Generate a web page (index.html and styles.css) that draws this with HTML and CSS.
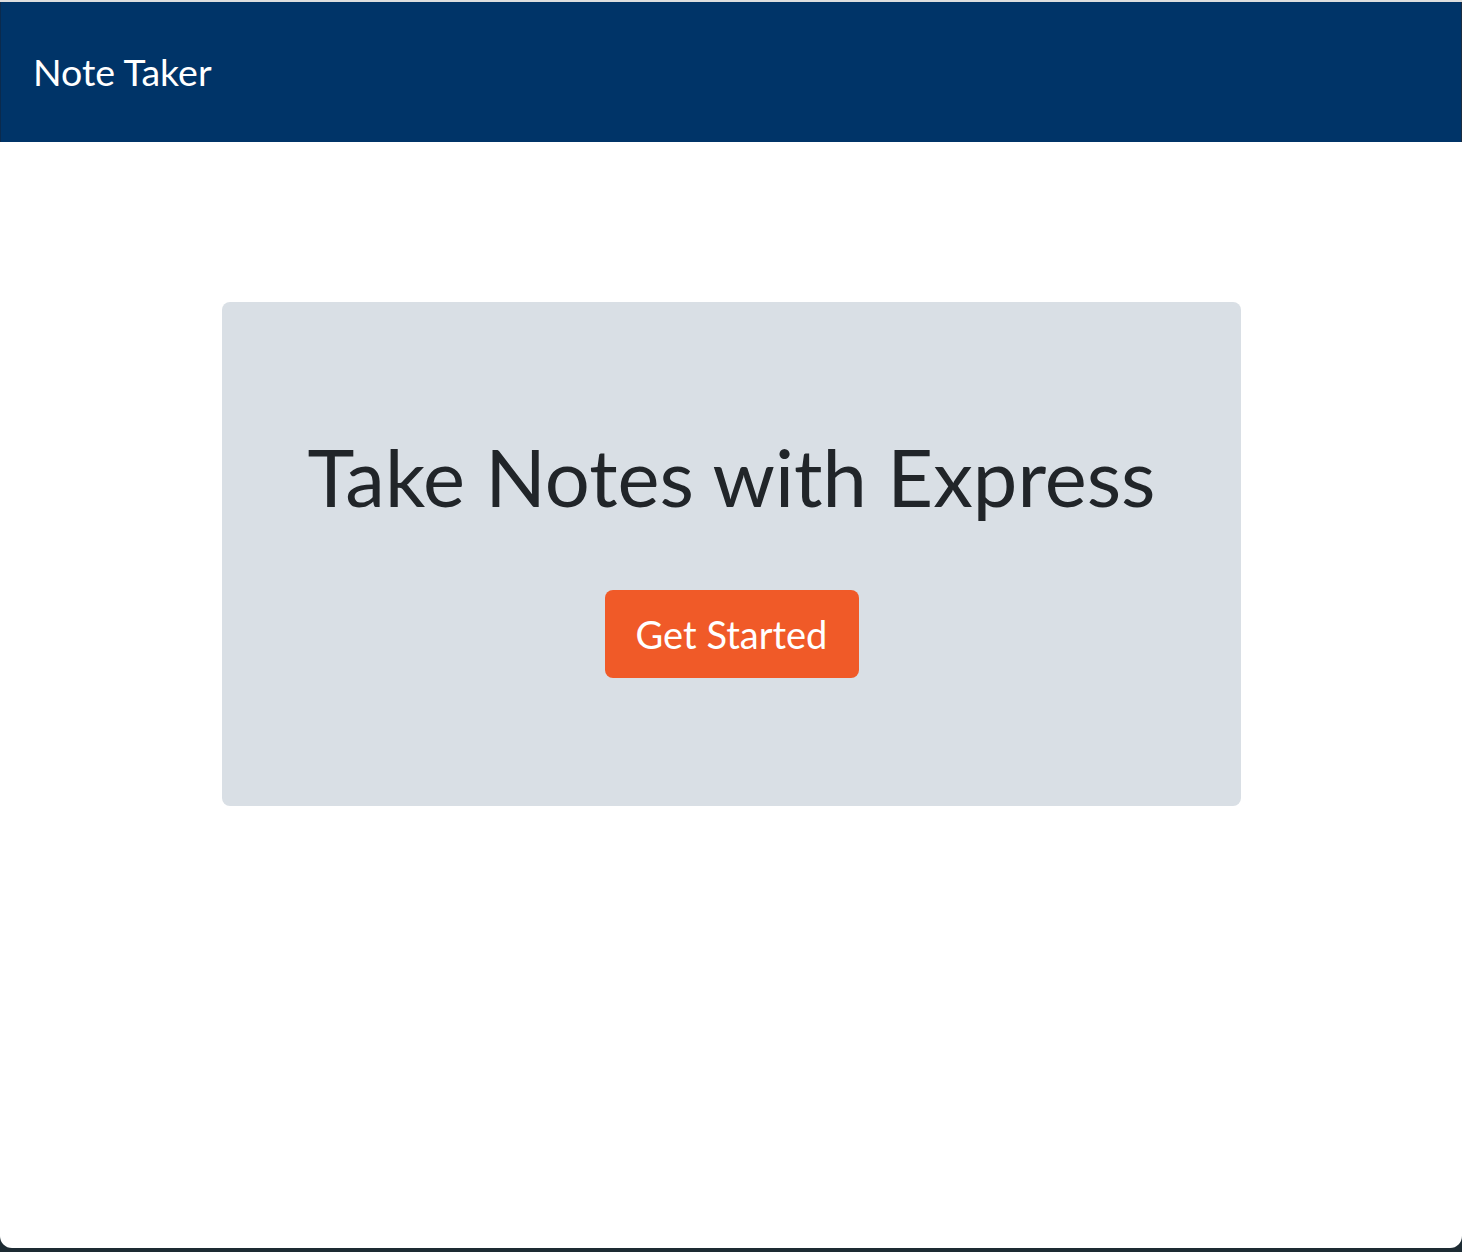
FILE: index.html
```html
<!DOCTYPE html>
<html lang="en">
<head>
<meta charset="utf-8">
<title>Note Taker</title>
<link rel="stylesheet" href="styles.css">
</head>
<body>
<div class="window">
  <nav class="navbar">
    <span class="brand">Note Taker</span>
  </nav>
  <main class="content">
    <section class="jumbotron">
      <h1 class="title">Take Notes with Express</h1>
      <a class="btn" href="#">Get Started</a>
    </section>
  </main>
</div>
</body>
</html>
```
FILE: styles.css
```css
html, body {
  margin: 0;
  padding: 0;
  height: 100%;
}
body {
  background: #1d2b33;
  font-family: Lato, "Open Sans", sans-serif;
  color: #212529;
}
.window {
  height: 1248px;
  background: #ffffff;
  border-top: 2px solid #dedede;
  border-radius: 0 0 12px 12px;
  box-sizing: border-box;
  display: flex;
  flex-direction: column;
}
.navbar {
  height: 140px;
  background: #003468;
  display: flex;
  align-items: center;
  padding: 0 32px;
  border-left: 1px solid #0b2a4d;
  border-right: 1px solid #1a2d42;
}
.brand {
  color: #ffffff;
  font-size: 37.5px;
  line-height: 1;
}
.content {
  display: flex;
  justify-content: center;
  padding-top: 160px;
  padding-left: 1px;
}
.jumbotron {
  width: 1019px;
  height: 504px;
  box-sizing: border-box;
  background: #d9dfe5;
  border-radius: 8px;
  display: flex;
  flex-direction: column;
  align-items: center;
  padding-top: 127px;
}
.title {
  margin: 0;
  font-weight: 400;
  font-size: 79.5px;
  line-height: 1.2;
  color: #212529;
}
.btn {
  margin-top: 66px;
  display: inline-flex;
  align-items: center;
  justify-content: center;
  width: 254px;
  height: 88px;
  box-sizing: border-box;
  background: #f05a28;
  color: #ffffff;
  border-radius: 8px;
  font-size: 38px;
  text-decoration: none;
}
```
